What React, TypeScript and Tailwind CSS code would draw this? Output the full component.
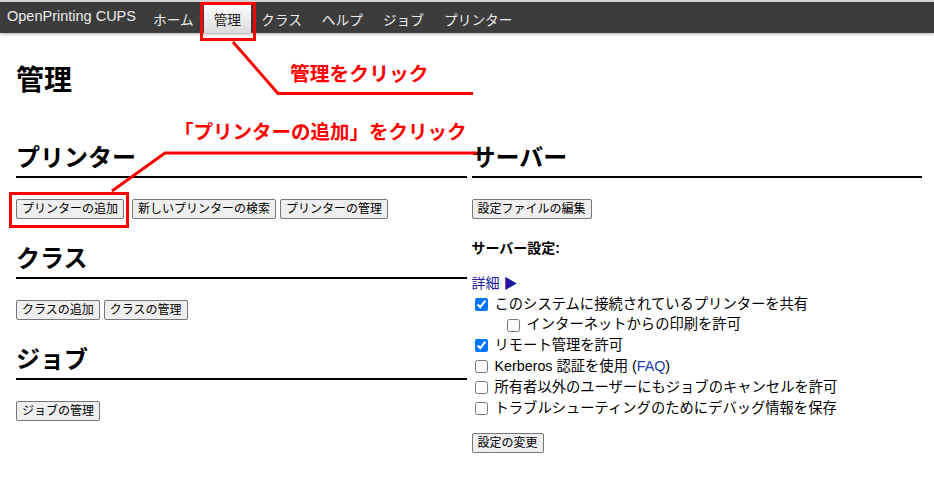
import { ReactNode } from 'react';

const font = 'font-["Liberation_Sans","Noto_Sans_CJK_JP",sans-serif]';

const navLinks = ['ホーム', '管理', 'クラス', 'ヘルプ', 'ジョブ', 'プリンター'];

const Btn = ({ children, className = '' }: { children: ReactNode; className?: string }) => (
    <button className={`rounded-[2px] border border-[#767676] bg-[#efefef] px-[5px] py-px text-[12px] leading-4 text-black ${className}`}>
        {children}
    </button>
);

const Section = ({ title, first = false, children }: { title: string; first?: boolean; children: ReactNode }) => (
    <div className={first ? '' : 'mt-[26px]'}>
        <h2 className="border-b-2 border-black pb-1 text-[24px] leading-[28px] font-bold">{title}</h2>
        <div className="mt-[21px] flex gap-1">{children}</div>
    </div>
);

const Check = ({ label, checked = false, indent = false }: { label: ReactNode; checked?: boolean; indent?: boolean }) => (
    <label className="flex h-[20.8px] items-center text-[14.3px]">
        <input
            type="checkbox"
            defaultChecked={checked}
            className={`m-0 mr-[7px] h-[13px] w-[13px] ${indent ? 'ml-[35px]' : 'ml-[3px]'}`}
        />
        <span>{label}</span>
    </label>
);

export default function App() {
    return (
        <div className={`relative h-[494px] w-[934px] overflow-hidden bg-white text-[14px] text-black ${font}`}>
            {/* ナビゲーション */}
            <div className="flex h-[33px] border-t-2 border-[#d4d4d4] bg-[#3c3c3c] shadow-[0_1px_3px_rgba(0,0,0,0.35)]">
                <div className="flex w-[143px] items-center pb-[1px] pl-[7px] text-[14.5px] text-[#ececec]">OpenPrinting CUPS</div>
                {navLinks.map((l) => (
                    <div
                        key={l}
                        className={`flex items-center px-[10px] pt-[7px] text-[13.7px] ${l === '管理' ? 'bg-gradient-to-b from-white to-[#dcdcdc] text-[#222]' : 'text-[#ececec]'}`}
                    >
                        {l}
                    </div>
                ))}
            </div>

            <div className="pr-3 pl-4">
                <h1 className="mt-[33px] text-[28px] leading-[30px] font-bold">管理</h1>

                <div className="mt-[48px] grid grid-cols-2 gap-[5px]">
                    {/* 左カラム */}
                    <div>
                        <Section title="プリンター" first>
                            <Btn className="mr-[4px]">プリンターの追加</Btn>
                            <Btn>新しいプリンターの検索</Btn>
                            <Btn>プリンターの管理</Btn>
                        </Section>
                        <Section title="クラス">
                            <Btn>クラスの追加</Btn>
                            <Btn>クラスの管理</Btn>
                        </Section>
                        <Section title="ジョブ">
                            <Btn>ジョブの管理</Btn>
                        </Section>
                    </div>

                    {/* 右カラム */}
                    <div>
                        <h2 className="border-b-2 border-black pb-1 text-[24px] leading-[28px] font-bold">サーバー</h2>
                        <div className="mt-[21px] flex">
                            <Btn>設定ファイルの編集</Btn>
                        </div>
                        <p className="mt-[19px] leading-5 font-bold">サーバー設定:</p>
                        <p className="mt-[15px] leading-[21px] text-[#22169c]">詳細 ▶</p>
                        <Check checked label="このシステムに接続されているプリンターを共有" />
                        <Check indent label="インターネットからの印刷を許可" />
                        <Check checked label="リモート管理を許可" />
                        <Check
                            label={
                                <>
                                    Kerberos 認証を使用 (<span className="text-[#1d3fae]">FAQ</span>)
                                </>
                            }
                        />
                        <Check label="所有者以外のユーザーにもジョブのキャンセルを許可" />
                        <Check label="トラブルシューティングのためにデバッグ情報を保存" />
                        <div className="mt-[14px] flex">
                            <Btn>設定の変更</Btn>
                        </div>
                    </div>
                </div>
            </div>

            {/* 注釈 */}
            <svg className="pointer-events-none absolute top-0 left-0" width="934" height="494">
                <rect x="201.5" y="3.5" width="53" height="36" fill="none" stroke="#ff0000" strokeWidth="3" />
                <polyline points="233,42 278,93.5 473,93.5" fill="none" stroke="#ff0000" strokeWidth="3" />
                <rect x="10.5" y="193.5" width="117" height="33" fill="none" stroke="#ff0000" strokeWidth="3" />
                <polyline points="477,153 165,153 112,191" fill="none" stroke="#ff0000" strokeWidth="3" />
            </svg>
            <div className="absolute top-[64px] left-[290px] text-[19.8px] leading-[20px] font-bold text-[#ff0000]">管理をクリック</div>
            <div className="absolute top-[122px] left-[174px] text-[19.5px] leading-[20px] font-bold text-[#ff0000]">
                「プリンターの追加」をクリック
            </div>
        </div>
    );
}
